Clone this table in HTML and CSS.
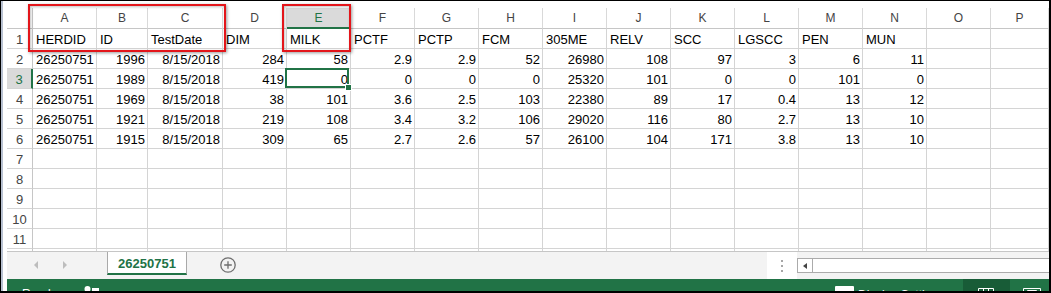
FILE: index.html
```html
<!DOCTYPE html>
<html>
<head>
<meta charset="utf-8">
<link rel="stylesheet" href="styles.css">
</head>
<body>
<div class="window">
  <div class="edge"></div>
  <div class="main">
    <div class="topgap"></div>
    <div class="sheet">
      <div class="corner"></div><div class="ch">A</div><div class="ch">B</div><div class="ch">C</div><div class="ch">D</div><div class="ch sel">E</div><div class="ch">F</div><div class="ch">G</div><div class="ch">H</div><div class="ch">I</div><div class="ch">J</div><div class="ch">K</div><div class="ch">L</div><div class="ch">M</div><div class="ch">N</div><div class="ch">O</div><div class="ch">P</div>

      <div class="rh">1</div><div>HERDID</div><div>ID</div><div>TestDate</div><div>DIM</div><div>MILK</div><div>PCTF</div><div>PCTP</div><div>FCM</div><div>305ME</div><div>RELV</div><div>SCC</div><div>LGSCC</div><div>PEN</div><div>MUN</div><div></div><div></div>

      <div class="rh">2</div><div>26250751</div><div class="n">1996</div><div class="n">8/15/2018</div><div class="n">284</div><div class="n">58</div><div class="n">2.9</div><div class="n">2.9</div><div class="n">52</div><div class="n">26980</div><div class="n">108</div><div class="n">97</div><div class="n">3</div><div class="n">6</div><div class="n">11</div><div></div><div></div>

      <div class="rh sel">3</div><div>26250751</div><div class="n">1989</div><div class="n">8/15/2018</div><div class="n">419</div><div class="n active">0<span class="cursor"><span class="handle"></span></span></div><div class="n">0</div><div class="n">0</div><div class="n">0</div><div class="n">25320</div><div class="n">101</div><div class="n">0</div><div class="n">0</div><div class="n">101</div><div class="n">0</div><div></div><div></div>

      <div class="rh">4</div><div>26250751</div><div class="n">1969</div><div class="n">8/15/2018</div><div class="n">38</div><div class="n">101</div><div class="n">3.6</div><div class="n">2.5</div><div class="n">103</div><div class="n">22380</div><div class="n">89</div><div class="n">17</div><div class="n">0.4</div><div class="n">13</div><div class="n">12</div><div></div><div></div>

      <div class="rh">5</div><div>26250751</div><div class="n">1921</div><div class="n">8/15/2018</div><div class="n">219</div><div class="n">108</div><div class="n">3.4</div><div class="n">3.2</div><div class="n">106</div><div class="n">29020</div><div class="n">116</div><div class="n">80</div><div class="n">2.7</div><div class="n">13</div><div class="n">10</div><div></div><div></div>

      <div class="rh">6</div><div>26250751</div><div class="n">1915</div><div class="n">8/15/2018</div><div class="n">309</div><div class="n">65</div><div class="n">2.7</div><div class="n">2.6</div><div class="n">57</div><div class="n">26100</div><div class="n">104</div><div class="n">171</div><div class="n">3.8</div><div class="n">13</div><div class="n">10</div><div></div><div></div>

      <div class="rh">7</div><div></div><div></div><div></div><div></div><div></div><div></div><div></div><div></div><div></div><div></div><div></div><div></div><div></div><div></div><div></div><div></div>
      <div class="rh">8</div><div></div><div></div><div></div><div></div><div></div><div></div><div></div><div></div><div></div><div></div><div></div><div></div><div></div><div></div><div></div><div></div>
      <div class="rh">9</div><div></div><div></div><div></div><div></div><div></div><div></div><div></div><div></div><div></div><div></div><div></div><div></div><div></div><div></div><div></div><div></div>
      <div class="rh">10</div><div></div><div></div><div></div><div></div><div></div><div></div><div></div><div></div><div></div><div></div><div></div><div></div><div></div><div></div><div></div><div></div>
      <div class="rh">11</div><div></div><div></div><div></div><div></div><div></div><div></div><div></div><div></div><div></div><div></div><div></div><div></div><div></div><div></div><div></div><div></div>
      <div class="rh"></div><div></div><div></div><div></div><div></div><div></div><div></div><div></div><div></div><div></div><div></div><div></div><div></div><div></div><div></div><div></div><div></div>
    </div>

    <div class="tabbar">
      <div class="nav"><span class="arr-l"></span><span class="arr-r"></span></div>
      <div class="tab">26250751</div>
      <svg class="add" width="16" height="16" viewBox="0 0 16 16"><circle cx="8" cy="8" r="7.2" fill="none" stroke="#6f6f6f" stroke-width="1.3"/><path d="M8 4.2v7.6M4.2 8h7.6" stroke="#6f6f6f" stroke-width="1.3"/></svg>
      <div class="spacer"></div>
      <div class="split"><i></i><i></i><i></i></div>
      <div class="hscroll"><div class="sbox"><div class="sbtn"><span class="arr-s"></span></div></div></div>
    </div>

    <div class="status">
      <div class="ready">Ready</div>
      <svg class="macro" width="16" height="12" viewBox="0 0 16 12"><circle cx="3.5" cy="10" r="3" fill="#fff"/><rect x="8" y="9" width="7" height="6" fill="#fff"/></svg>
      <div class="spacer"></div>
      <div class="disp">
        <svg width="19" height="12" viewBox="0 0 19 12"><rect x="0" y="7" width="19" height="6" rx="1" fill="#fff"/></svg>
        <span>Display Settings</span>
      </div>
      <div class="view-normal"><svg width="16" height="12" viewBox="0 0 16 12"><path d="M0.5 9.5h15v4M0.5 9.5v4M5.5 9.5v4M10.5 9.5v4" fill="none" stroke="#fff"/></svg></div>
      <div class="view-layout"><svg width="18" height="12" viewBox="0 0 18 12"><path d="M0.5 9.5h17v4M0.5 9.5v4M4.5 11.5h9v3M4.5 11.5v3" fill="none" stroke="#fff"/></svg></div>
    </div>
  </div>

  <div class="mark m1"></div>
  <div class="mark m2"></div>
</div>
</body>
</html>
```
FILE: styles.css
```css
* { box-sizing: border-box; }

body {
  margin: 0;
  background: #fff;
  font-family: "Liberation Sans", Arial, sans-serif;
}

.window {
  position: relative;
  width: 1051px;
  height: 293px;
  border-style: solid;
  border-color: #000;
  border-width: 1px 2px 2px 1px;
  display: flex;
  overflow: hidden;
  background: #fff;
}

.edge {
  width: 2px;
  flex: none;
  background: #b8c1d1;
}

.main {
  flex: 1;
  min-width: 0;
  padding-left: 4px;
  display: flex;
  flex-direction: column;
}

.topgap { height: 7px; flex: none; }

/* ---------- grid ---------- */
.sheet {
  height: 243px;
  flex: none;
  overflow: hidden;
  display: grid;
  grid-template-columns: 26px 64px 51px 75px repeat(12, 64px) 1fr;
  grid-template-rows: 21px;
  grid-auto-rows: 20px;
}

.sheet > div {
  border-right: 1px solid #d4d4d4;
  border-bottom: 1px solid #d4d4d4;
  font-size: 13px;
  line-height: 19px;
  padding: 1px 3px 0;
  white-space: nowrap;
  overflow: hidden;
  color: #000;
}

.sheet > .n { text-align: right; padding-right: 2px; }

.sheet > .corner {
  border-bottom-color: #c6c6c6;
  border-right-color: #c6c6c6;
}

.sheet > .ch {
  font-size: 12px;
  text-align: center;
  color: #444;
  padding: 1px 0 0;
  border-bottom-color: #c6c6c6;
  border-right-color: #d9d9d9;
}

.sheet > .rh {
  text-align: center;
  color: #444;
  padding: 1px 0 0;
  border-right-color: #c6c6c6;
}

.sheet > .ch.sel {
  background: #dadada;
  color: #217346;
  border-bottom: 2px solid #217346;
}

.sheet > .rh.sel {
  background: #dadada;
  color: #217346;
  border-right: 2px solid #217346;
}

.sheet > .active {
  position: relative;
  overflow: visible;
}

.cursor {
  position: absolute;
  left: -2px;
  top: -1px;
  right: 1px;
  bottom: 0;
  border: 2px solid #217346;
}

.handle {
  position: absolute;
  right: -5px;
  bottom: -5px;
  width: 7px;
  height: 7px;
  background: #217346;
  border: 1px solid #fff;
}

/* ---------- sheet tabs ---------- */
.tabbar {
  height: 28px;
  flex: none;
  display: flex;
  border-top: 1px solid #c6c6c6;
  background: #f3f3f3;
}

.nav {
  width: 100px;
  flex: none;
  display: flex;
  align-items: center;
  padding: 0 0 1px 27px;
  gap: 25px;
}

.arr-l, .arr-r {
  width: 0;
  height: 0;
  border-top: 4px solid transparent;
  border-bottom: 4px solid transparent;
}
.arr-l { border-right: 4px solid #bdbdbd; }
.arr-r { border-left: 4px solid #bdbdbd; }

.tab {
  width: 80px;
  height: 23px;
  flex: none;
  background: #fff;
  border-left: 1px solid #a9a9a9;
  border-right: 1px solid #a9a9a9;
  border-bottom: 2px solid #217346;
  color: #217346;
  font-weight: bold;
  font-size: 13px;
  line-height: 21px;
  padding-top: 1px;
  text-align: center;
}

.add {
  flex: none;
  margin: 5px 0 0 33px;
}

.spacer { flex: 1; }

.split {
  width: 30px;
  flex: none;
  background: #fff;
  display: flex;
  flex-direction: column;
  align-items: center;
  justify-content: center;
  gap: 3px;
}
.split i {
  display: block;
  width: 2px;
  height: 2px;
  background: #a6a6a6;
}

.hscroll {
  width: 252px;
  flex: none;
  padding-top: 6px;
}

.sbox {
  height: 15px;
  border: 1px solid #ababab;
  border-right: none;
  background: #fff;
  display: flex;
}

.sbtn {
  width: 15px;
  border-right: 1px solid #ababab;
  display: flex;
  align-items: center;
  justify-content: center;
}

.arr-s {
  width: 0;
  height: 0;
  border-top: 3.5px solid transparent;
  border-bottom: 3.5px solid transparent;
  border-right: 4px solid #444;
}

/* ---------- status bar ---------- */
.status {
  height: 12px;
  flex: none;
  display: flex;
  overflow: hidden;
  background: #217346;
  color: #fff;
  font-size: 12px;
  line-height: 14px;
}

.ready {
  width: 62px;
  flex: none;
  margin-left: 15px;
  padding-top: 8px;
}

.macro { flex: none; display: block; }

.disp {
  width: 128px;
  flex: none;
  display: flex;
  gap: 4px;
}
.disp svg { display: block; flex: none; }
.disp span { padding-top: 9px; white-space: nowrap; }

.view-normal {
  width: 47px;
  flex: none;
  background: #185c37;
  padding-left: 15px;
}
.view-normal svg, .view-layout svg { display: block; }

.view-layout {
  width: 39px;
  flex: none;
  padding-left: 13px;
}

/* ---------- annotation boxes ---------- */
.mark {
  position: absolute;
  top: 3px;
  height: 48px;
  border: 2px solid #e3151a;
  box-shadow: 1px 1px 3px rgba(0, 0, 0, 0.4), inset 1px 1px 3px rgba(0, 0, 0, 0.25);
}
.m1 { left: 27px; width: 198px; }
.m2 { left: 281px; width: 69px; }
```
